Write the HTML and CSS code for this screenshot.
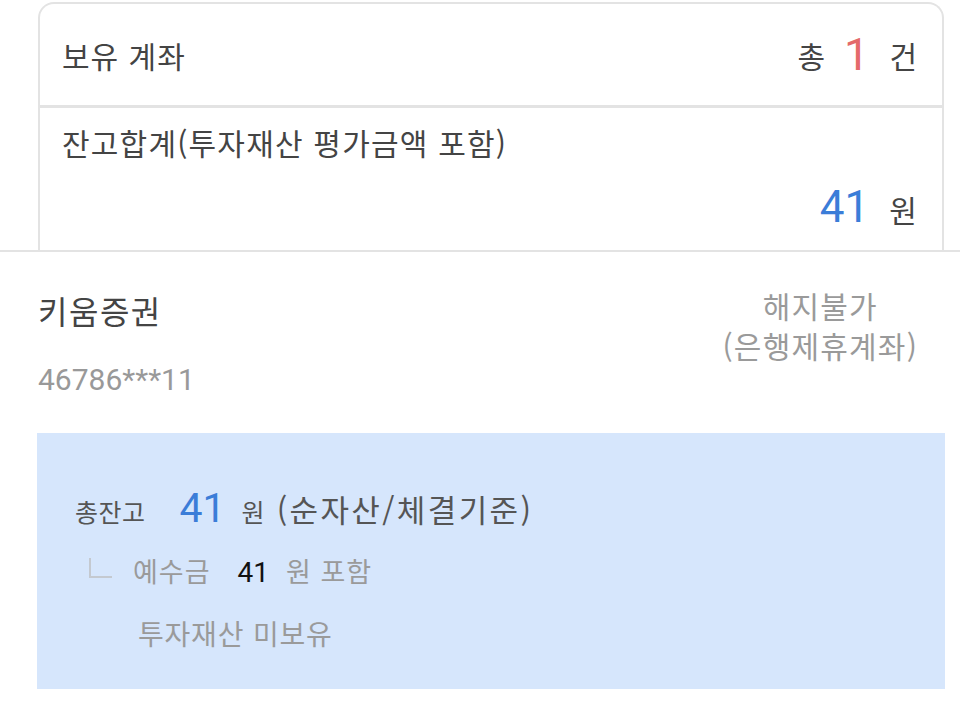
FILE: index.html
```html
<!DOCTYPE html>
<html lang="ko">
<head>
<meta charset="utf-8">
<link rel="stylesheet" href="styles.css">
</head>
<body>
<div class="card">
  <div class="row-head">
    <span class="label">보유 계좌</span>
    <span class="count">총 <span class="num red">1</span> 건</span>
  </div>
  <div class="row-sum">
    <div class="label">잔고합계(투자재산 평가금액 포함)</div>
    <div class="sum"><span class="num blue big">41</span><span>원</span></div>
  </div>
</div>
<section class="account">
  <div class="acct-head">
    <div class="acct-left">
      <div class="bank">키움증권</div>
      <div class="acct-no">46786***11</div>
    </div>
    <div class="acct-right">해지불가<br>(은행제휴계좌)</div>
  </div>
  <div class="balance">
    <div class="bal-main"><span class="bal-label">총잔고</span><span class="num blue bal-num">41</span><span class="won-s">원</span><span class="bal-note">(순자산/체결기준)</span></div>
    <div class="bal-sub"><span class="corner"></span><span class="sub-label">예수금</span><span class="num sub-num">41</span><span class="sub-label">원 포함</span></div>
    <div class="bal-inv">투자재산 미보유</div>
  </div>
</section>
</body>
</html>
```

FILE: styles.css
```css
* { box-sizing: border-box; }
html, body { margin: 0; padding: 0; background: #fff; }
body {
  width: 960px;
  height: 720px;
  overflow: hidden;
  font-family: "Noto Sans CJK KR", "Noto Sans", sans-serif;
  color: #444;
}
.num { font-family: Roboto, "Noto Sans", sans-serif; letter-spacing: 0; }
.red { color: #e46a6a; }
.blue { color: #3b7dd8; }

.card {
  margin: 2px 0 0 38px;
  width: 906px;
  height: 248px;
  border: 2px solid #e3e3e3;
  border-bottom: none;
  border-radius: 16px 16px 0 0;
  display: flex;
  flex-direction: column;
}
.row-head {
  height: 104px;
  padding: 0 24px 0 22px;
  display: flex;
  align-items: center;
  justify-content: space-between;
  border-bottom: 3px solid #e3e3e3;
  font-size: 30px;
  letter-spacing: 1px;
}
.count { display: flex; align-items: center; }
.count .num { font-size: 45px; margin: 0 20px 0 18px; line-height: 1; }
.row-sum {
  flex: 1;
  padding: 16px 24px 0 22px;
  font-size: 30px;
  letter-spacing: 1.2px;
}
.row-sum .label { line-height: 36px; }
.sum {
  margin-top: 19px;
  display: flex;
  justify-content: flex-end;
  align-items: baseline;
  gap: 20px;
  line-height: 56px;
}
.big { font-size: 44px; }

.account {
  border-top: 2px solid #e3e3e3;
  padding: 0 15px 0 37px;
}
.acct-head {
  display: flex;
  justify-content: space-between;
  padding: 24px 27px 0 1px;
  height: 181px;
}
.bank { font-size: 32px; line-height: 68px; color: #444; letter-spacing: 1.5px; }
.acct-no {
  font-family: Roboto, "Noto Sans", sans-serif;
  font-size: 30px;
  color: #999;
  line-height: 36px;
  margin-top: 18px;
}
.acct-right {
  text-align: center;
  font-size: 30px;
  letter-spacing: 1.2px;
  color: #9a9a9a;
  line-height: 40px;
  padding-top: 9px;
}

.balance {
  width: 908px;
  height: 256px;
  background: #d6e6fc;
  padding: 50px 0 0 0;
}
.bal-main {
  display: flex;
  align-items: baseline;
  line-height: 50px;
  color: #555;
  padding-left: 38px;
}
.bal-label { font-size: 25px; letter-spacing: 0.5px; }
.bal-num { font-size: 41px; margin: 0 16px 0 34px; }
.won-s { font-size: 25px; margin-right: 12px; }
.bal-note { font-size: 31px; letter-spacing: 2.4px; }
.bal-sub {
  display: flex;
  align-items: baseline;
  line-height: 46px;
  margin-top: 12px;
  color: #9a9a9a;
  font-size: 27px;
  letter-spacing: 1px;
}
.corner {
  display: inline-block;
  width: 23px;
  height: 20px;
  border-left: 2px solid #c4c9d0;
  border-bottom: 2px solid #c4c9d0;
  margin: 0 21px 0 52px;
  align-self: center;
  transform: translateY(-4px);
}
.sub-num { color: #111; font-size: 28px; margin: 0 17px 0 27px; }
.bal-inv {
  color: #9a9a9a;
  font-size: 28px;
  letter-spacing: 0.8px;
  line-height: 46px;
  margin: 14px 0 0 101px;
}
```
